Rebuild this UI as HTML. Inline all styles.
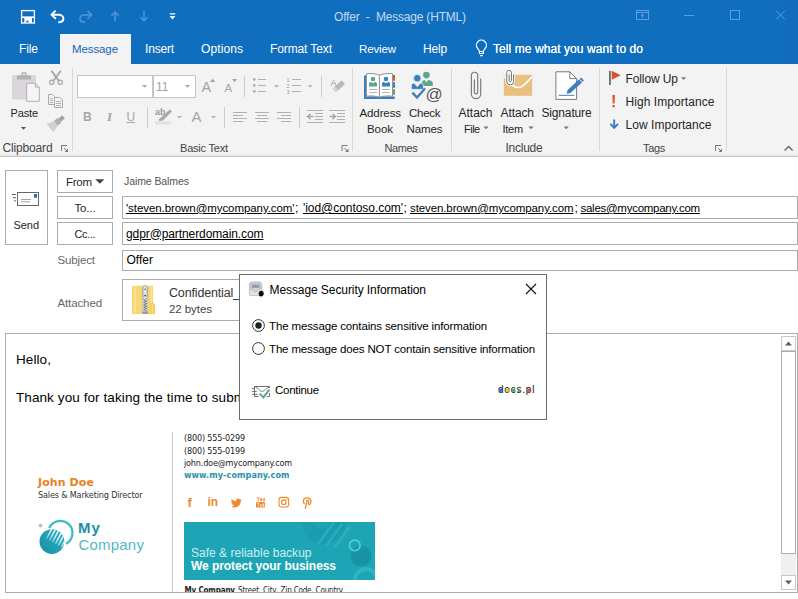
<!DOCTYPE html><html lang="en"><head><meta charset="utf-8"><title>Offer - Message (HTML)</title><style>
*{box-sizing:border-box;margin:0;padding:0}
html,body{width:798px;height:599px;overflow:hidden;background:#fff;font-family:"Liberation Sans",sans-serif}
.a,.t,svg{position:absolute}
.t{white-space:pre}
svg{overflow:visible}
#win{position:relative;width:798px;height:599px;overflow:hidden;background:#fff}
.sep{position:absolute;width:1px;background:#d8d8d8}
.btn{position:absolute;border:1px solid #ababab;background:#fff}
.fld{position:absolute;border:1px solid #ababab;background:#fff}
</style></head><body><div id="win"><header><div class="a" style="left:0px;top:0px;width:798px;height:64px;background:#106ebe"></div><div class="a" style="left:782px;top:0px;width:16px;height:64px;background:linear-gradient(90deg,#106ebe,#146abf 45%)"></div><span class="t" style="left:334px;top:11px;font-size:12px;line-height:12px;color:#c3daf0;letter-spacing:-0.191px;">Offer  -  Message (HTML)</span><div class="a" style="left:60px;top:34px;width:71px;height:30px;background:#f3f3f3"></div><nav><span class="t" style="left:19px;top:42.5px;font-size:12px;line-height:12px;color:#fff;letter-spacing:-0.098px;">File</span><span class="t" style="left:72px;top:43.5px;font-size:11.5px;line-height:11.5px;color:#1565b6;letter-spacing:-0.103px;">Message</span><span class="t" style="left:145px;top:42.5px;font-size:12px;line-height:12px;color:#fff;letter-spacing:-0.185px;">Insert</span><span class="t" style="left:201px;top:42.5px;font-size:12px;line-height:12px;color:#fff;letter-spacing:0.099px;">Options</span><span class="t" style="left:270px;top:42.5px;font-size:12px;line-height:12px;color:#fff;letter-spacing:-0.109px;">Format Text</span><span class="t" style="left:359px;top:43.5px;font-size:11.5px;line-height:11.5px;color:#fff;letter-spacing:-0.131px;">Review</span><span class="t" style="left:423px;top:42.5px;font-size:12px;line-height:12px;color:#fff;letter-spacing:-0.196px;">Help</span><span class="t" style="left:493px;top:42.5px;font-size:12px;line-height:12px;color:#fff;letter-spacing:0.073px;text-shadow:0 0 0.4px #fff;">Tell me what you want to do</span></nav></header><svg style="left:0;top:0" width="798" height="64" viewBox="0 0 798 64"><g fill="none" stroke="#fff" stroke-width="1.3"><rect x="21.6" y="10.6" width="12.8" height="12.4"/><path d="M21.6 17.2H34.4" stroke-width="1.6"/></g><path d="M24.3 18H32V23H28.6V20.8H26.2V23H24.3Z" fill="#fff"/><g fill="none" stroke="#fff" stroke-width="2" stroke-linejoin="miter"><path d="M55.6 10.6L51.6 14.8L55.9 18.9"/><path d="M52 14.8H58.5C61.6 14.8 63.4 16.6 63.4 18.6C63.4 20.8 61.6 22.3 58.3 22.3" stroke-linecap="butt"/></g><g fill="none" stroke="#4a93d6" stroke-width="1.8"><path d="M87.6 10.8L91.6 14.8L87.4 18.9"/><path d="M91.2 14.8H84.8C81.8 14.8 80 16.6 80 18.6C80 20.8 81.8 22.3 85 22.3"/></g><g fill="none" stroke="#4a93d6" stroke-width="1.7"><path d="M115 21.6V12M111.3 15.8L115 12L118.7 15.8"/><path d="M144 11V20.8M140.3 17L144 20.8L147.7 17"/></g><path d="M169.8 13.2H175.2V14.4H169.8Z M169.6 16H175.4L172.5 19.4Z" fill="#fff"/><g fill="none" stroke="#fff" stroke-width="1.2" stroke-linejoin="round"><path d="M479.4 53.5V51L477.4 48.2A5 5 0 1 1 485.4 48.2L483.4 51V53.5Z"/><path d="M479.4 51.5H483.4M480.2 55.7H482.8"/></g><g fill="none" stroke="#5d9fdc" stroke-width="1"><rect x="636.5" y="10.5" width="12" height="9"/><path d="M636.5 12.5H648.5M642.5 18V14.2M640.8 15.8L642.5 14.2L644.2 15.8"/><path d="M684 15.5H694"/><rect x="730.5" y="10.5" width="9" height="9"/><path d="M776 10.5L785 19.5M785 10.5L776 19.5"/></g></svg><section id="ribbon"><div class="a" style="left:0px;top:64px;width:798px;height:91px;background:#f3f3f3"></div><div class="a" style="left:0px;top:155px;width:798px;height:1px;background:#e4e4e4"></div><div class="a" style="left:0px;top:156px;width:798px;height:1px;background:#c8c8c8"></div><div class="sep" style="left:72px;top:68px;height:83px"></div><div class="sep" style="left:352px;top:68px;height:83px"></div><div class="sep" style="left:451px;top:68px;height:83px"></div><div class="sep" style="left:599px;top:68px;height:83px"></div><div class="sep" style="left:726px;top:68px;height:83px"></div><span class="t" style="left:10.5px;top:108px;font-size:11px;line-height:11px;color:#262626;letter-spacing:-0.142px;">Paste</span><span class="t" style="left:2.5px;top:142px;font-size:12px;line-height:12px;color:#444444;letter-spacing:-0.162px;">Clipboard</span><span class="t" style="left:180px;top:143px;font-size:11px;line-height:11px;color:#444444;letter-spacing:-0.204px;">Basic Text</span><span class="t" style="left:384.5px;top:143px;font-size:11px;line-height:11px;color:#444444;letter-spacing:-0.410px;">Names</span><span class="t" style="left:505.5px;top:142px;font-size:12px;line-height:12px;color:#444444;letter-spacing:-0.262px;">Include</span><span class="t" style="left:643px;top:143px;font-size:11px;line-height:11px;color:#444444;letter-spacing:-0.357px;">Tags</span><span class="t" style="left:359.5px;top:107.5px;font-size:11.5px;line-height:11.5px;color:#262626;letter-spacing:-0.106px;">Address</span><span class="t" style="left:367px;top:123.5px;font-size:11.5px;line-height:11.5px;color:#262626;letter-spacing:-0.062px;">Book</span><span class="t" style="left:409px;top:107.5px;font-size:11.5px;line-height:11.5px;color:#262626;letter-spacing:-0.247px;">Check</span><span class="t" style="left:406.5px;top:123.5px;font-size:11.5px;line-height:11.5px;color:#262626;letter-spacing:-0.097px;">Names</span><span class="t" style="left:458.5px;top:106.5px;font-size:12px;line-height:12px;color:#262626;letter-spacing:-0.006px;">Attach</span><span class="t" style="left:464px;top:123.5px;font-size:11px;line-height:11px;color:#262626;letter-spacing:-0.496px;">File</span><span class="t" style="left:500.5px;top:106.5px;font-size:12px;line-height:12px;color:#262626;letter-spacing:-0.097px;">Attach</span><span class="t" style="left:502.5px;top:123.5px;font-size:11px;line-height:11px;color:#262626;letter-spacing:-0.259px;">Item</span><span class="t" style="left:541.5px;top:106.5px;font-size:12px;line-height:12px;color:#262626;letter-spacing:-0.162px;">Signature</span><span class="t" style="left:625.5px;top:73px;font-size:12px;line-height:12px;color:#262626;letter-spacing:-0.101px;">Follow Up</span><span class="t" style="left:625.5px;top:96px;font-size:12px;line-height:12px;color:#262626;letter-spacing:0.066px;">High Importance</span><span class="t" style="left:625.5px;top:119px;font-size:12px;line-height:12px;color:#262626;letter-spacing:0.045px;">Low Importance</span><div class="a" style="left:77px;top:75px;width:76px;height:23px;border:1px solid #c6c6c6;background:#fff"></div><div class="a" style="left:153px;top:75px;width:43px;height:23px;border:1px solid #c6c6c6;background:#fff"></div><span class="t" style="left:156px;top:80.5px;font-size:12px;line-height:12px;color:#a0a0a0;">11</span><span class="t" style="left:83px;top:110.5px;font-size:12px;line-height:12px;color:#a6a6a6;font-weight:700;">B</span><span class="t" style="left:107px;top:109.5px;font-size:13px;line-height:13px;color:#a6a6a6;font-style:italic;font-family:'Liberation Serif',serif;font-weight:700;">I</span><span class="t" style="left:126.5px;top:110.5px;font-size:12px;line-height:12px;color:#a6a6a6;text-decoration:underline;">U</span><svg style="left:0;top:64px" width="798" height="92" viewBox="0 64 798 92"><rect x="12" y="75" width="24" height="24.5" rx="1.2" fill="#d9d5db"/><path d="M17 79.6V75.6H21.2V74.4C21.2 72.8 22.4 71.8 24 71.8C25.6 71.8 26.8 72.8 26.8 74.4V75.6H31V79.6Z" fill="#b4b1b7"/><circle cx="24" cy="74.4" r="1.1" fill="#f3f3f3"/><path d="M26.7 83.3H35.4L39.3 87.2V101.3H26.7Z" fill="#f7f4f8" stroke="#b2b0b4" stroke-width="1"/><path d="M35.4 83.3V87.2H39.3" fill="none" stroke="#b2b0b4" stroke-width="1"/><path d="M20.9 127H26.1L23.5 129.8Z" fill="#555"/><g fill="none" stroke="#a3a3a3" stroke-width="1.8"><path d="M51.4 70.8L58.4 80.2M60.8 70.8L53.8 80.2"/><circle cx="51.8" cy="82.3" r="2.1" stroke-width="1.2"/><circle cx="60.2" cy="82.3" r="2.1" stroke-width="1.2"/></g><g fill="#f6f4f7" stroke="#aaa8ac" stroke-width="1"><path d="M48.5 94.5H52.5L54.5 96.5V104.5H48.5Z"/><path d="M54.5 97.5H60L62.5 100V107.5H54.5Z"/></g><g stroke="#aaa8ac" stroke-width="0.9"><path d="M50 98.5H53M50 100.5H53M50 102.5H53M56 101.5H61M56 103.5H61M56 105.5H61"/></g><g transform="translate(56.2 123) rotate(-40)"><rect x="4.4" y="-2" width="5.2" height="4" fill="#a2a0a4"/><rect x="-0.6" y="-3" width="5" height="6" fill="#b3b0b5"/><path d="M-0.6 -3.2L-8 -5.4V5.4L-0.6 3.2Z" fill="#d2ced4"/></g><g transform="translate(61 145)" fill="none" stroke="#7a7a7a" stroke-width="1"><path d="M0.5 6V0.5H6"/><path d="M3 3L6.5 6.5" /><path d="M7 3.6V7H3.6Z" fill="#7a7a7a" stroke="none"/></g></svg><span class="t" style="left:201.5px;top:80px;font-size:14.5px;line-height:14.5px;color:#a6a6a6;">A</span><span class="t" style="left:224.5px;top:83px;font-size:11.5px;line-height:11.5px;color:#a6a6a6;">A</span><span class="t" style="left:191.5px;top:109px;font-size:15px;line-height:15px;color:#a6a6a6;">A</span><span class="t" style="left:155px;top:108px;font-size:9px;line-height:9px;color:#9a9a9a;font-weight:700;">ab</span><span class="t" style="left:330.5px;top:78.5px;font-size:9px;line-height:9px;color:#9a9a9a;">A</span><span class="t" style="left:286.5px;top:77.5px;font-size:5.5px;line-height:5.5px;color:#9a9a9a;">1</span><span class="t" style="left:286.5px;top:83.5px;font-size:5.5px;line-height:5.5px;color:#9a9a9a;">2</span><span class="t" style="left:286.5px;top:89.5px;font-size:5.5px;line-height:5.5px;color:#9a9a9a;">3</span><svg style="left:0;top:64px" width="798" height="92" viewBox="0 64 798 92"><path d="M141.9 85H147.1L144.5 87.8Z" fill="#a8a8a8"/><path d="M184.9 85H190.1L187.5 87.8Z" fill="#a8a8a8"/><path d="M210 82L212.6 78.8L215.2 82Z M232 79L237.2 79L234.6 82.2Z" fill="#a6a6a6"/><path d="M244.5 76V97" stroke="#cdcdcd" stroke-width="1"/><path d="M321.5 76V97" stroke="#cdcdcd" stroke-width="1"/><path d="M147.5 107V128" stroke="#cdcdcd" stroke-width="1"/><path d="M224.5 107V128" stroke="#cdcdcd" stroke-width="1"/><path d="M299.5 107V128" stroke="#cdcdcd" stroke-width="1"/><g fill="#b0b0b0"><circle cx="254.3" cy="79.4" r="1.4"/><circle cx="254.3" cy="85.4" r="1.4"/><circle cx="254.3" cy="91.4" r="1.4"/></g><path d="M258 79.5H266M258 85.5H266M258 91.5H266 M292 79.5H301M292 85.5H301M292 91.5H301" stroke="#b0b0b0" stroke-width="1"/><path d="M273.9 85H279.1L276.5 87.8Z" fill="#b8b8b8"/><path d="M307.59999999999997 85H312.8L310.2 87.8Z" fill="#b8b8b8"/><path d="M176.9 116H182.1L179.5 118.8Z" fill="#b8b8b8"/><path d="M210.9 116H216.1L213.5 118.8Z" fill="#b8b8b8"/><g transform="translate(338.5 86.5) rotate(-42)"><rect x="-6" y="-2.6" width="12.5" height="5.2" rx="1" fill="#b9b9b9"/><rect x="-6" y="-2.6" width="3.2" height="5.2" rx="1" fill="#d8d8d8"/></g><rect x="155" y="121.2" width="16" height="3.4" fill="#e6dfe8"/><path d="M169.8 109.4L172 111.6L162.6 120.8H158.6V119.6Z" fill="#a9a9a9"/><path d="M233 112.5H247M233 115.5H243M233 118.5H247M233 121.5H243 M255 112.5H269M257 115.5H267M255 118.5H269M257 121.5H267 M277 112.5H291M281 115.5H291M277 118.5H291M281 121.5H291" stroke="#b0b0b0" stroke-width="1"/><path d="M307 110.5H323M315 113.5H323M315 116.5H323M315 119.5H323M307 122.5H323 M329 110.5H345M337 113.5H345M337 116.5H345M337 119.5H345M329 122.5H345" stroke="#b0b0b0" stroke-width="1"/><path d="M313.5 116.5H308M310.6 113.8L307.6 116.5L310.6 119.2 M329.5 116.5H335M332.4 113.8L335.4 116.5L332.4 119.2" stroke="#a6a6a6" stroke-width="1.4" fill="none"/><g transform="translate(341.5 145)" fill="none" stroke="#7a7a7a" stroke-width="1"><path d="M0.5 6V0.5H6"/><path d="M3 3L6.5 6.5" /><path d="M7 3.6V7H3.6Z" fill="#7a7a7a" stroke="none"/></g></svg><span class="t" style="left:425.5px;top:85.5px;font-size:17px;line-height:17px;color:#555;">@</span><svg style="left:0;top:64px" width="798" height="92" viewBox="0 64 798 92"><path d="M364 75.4H366.2V96.5H394.8V98.9H364Z" fill="#3d7ebf"/><rect x="392.6" y="75" width="2.4" height="5.8" fill="#d65532"/><rect x="392.6" y="82.2" width="2.4" height="5.6" fill="#3d7ebf"/><rect x="392.6" y="89.2" width="2.4" height="5.6" fill="#5ea58a"/><path d="M366.4 73.8C371 73.2 376 73.6 379.4 75.2C382.8 73.6 388 73.2 392.6 73.8V96.2C388 95.7 383 95.9 379.4 97.2C376 95.9 371 95.7 366.4 96.2Z" fill="#fff" stroke="#8c8c8c" stroke-width="1"/><path d="M379.4 75.2V97" stroke="#8c8c8c" stroke-width="1"/><circle cx="373" cy="79" r="2.3" fill="#5ea58a"/><path d="M369 86.6V84C369 82.6 370 82 371 82L373 83.2L375 82C376 82 377 82.6 377 84V86.6Z" fill="#5ea58a"/><circle cx="386" cy="79" r="2.3" fill="#3d7ebf"/><path d="M382 86.6V84C382 82.6 383 82 384 82L386 83.2L388 82C389 82 390 82.6 390 84V86.6Z" fill="#3d7ebf"/><path d="M369 89.5H377M369 92.5H377M382 89.5H390M382 92.5H390" stroke="#b4b4b4" stroke-width="1"/><circle cx="426.4" cy="75.1" r="3.3" fill="#5ea58a"/><path d="M422 86V83C422 81 423.2 80 424.6 80L426.4 82.4L428.2 80C429.6 80 432.8 81 432.8 83V86Z" fill="#5ea58a"/><circle cx="417.3" cy="78.2" r="3.8" fill="#3d7ebf" stroke="#f3f3f3" stroke-width="0.8"/><path d="M411.3 89.4V86C411.3 84 412.6 83 414 83L417.3 86.6L420.6 83C422 83 423.4 84 423.4 86V89.4Z" fill="#3d7ebf" stroke="#f3f3f3" stroke-width="0.8"/><path d="M412.4 92.6L417 97.6L425 88.4" fill="none" stroke="#3d7ebf" stroke-width="2.3"/><path d="M480.7 78.6V94A4.65 4.65 0 0 1 471.4 94V75.4A3.15 3.15 0 0 1 477.7 75.4V92.2A1.65 1.65 0 0 1 474.4 92.2V79.6" fill="none" stroke="#7d7d7d" stroke-width="1.2"/><rect x="503.8" y="74.8" width="28.4" height="21" fill="#e9c080"/><path d="M503.8 75.6C509 82 513 87.6 518 87.6C523 87.6 527 82 532.2 76.4" fill="none" stroke="#fff" stroke-width="1.5"/><path d="M513.6 74.4V81.6A3.4 3.4 0 0 1 506.8 81.6V72.6A2.3 2.3 0 0 1 511.4 72.6V80.6A1.1 1.1 0 0 1 509.2 80.6V74.8" fill="none" stroke="#fff" stroke-width="2.6"/><path d="M513.6 74.4V81.6A3.4 3.4 0 0 1 506.8 81.6V72.6A2.3 2.3 0 0 1 511.4 72.6V80.6A1.1 1.1 0 0 1 509.2 80.6V74.8" fill="none" stroke="#6e6e6e" stroke-width="1"/><path d="M483.4 126.5H488.6L486 129.3Z" fill="#777"/><path d="M528.4 126.5H533.6L531 129.3Z" fill="#777"/><path d="M563.6 126.5H568.8000000000001L566.2 129.3Z" fill="#777"/><path d="M681.0 77.2H686.2L683.6 80.0Z" fill="#777"/><path d="M555.9 71.8H569.8L576.6 78.6V99.4H555.9Z" fill="#fff" stroke="#7a7a7a" stroke-width="1"/><path d="M569.8 71.8V78.6H576.6" fill="none" stroke="#7a7a7a" stroke-width="1"/><path d="M558.6 95.3H574.3" stroke="#3d7ebf" stroke-width="1"/><g transform="translate(566.6 93.8) rotate(-43)"><path d="M0 0L3.4 -2.1H19V2.1H3.4Z" fill="#3d7ebf"/><path d="M19.8 -2.1H21.8V2.1H19.8Z" fill="#3d7ebf"/></g><rect x="609" y="71" width="1.8" height="14" fill="#6a6a6a"/><path d="M611.7 70.8L620.8 75.3L611.7 79.8Z" fill="#d9502f"/><path d="M612.3 95H615L614.6 103.4H612.7Z M612.5 105H614.8V107.2H612.5Z" fill="#e05a33"/><path d="M614.2 119.4V127.6M610.4 123.8L614.2 127.8L618 123.8" fill="none" stroke="#3a7bc0" stroke-width="1.9"/><g transform="translate(715 145)" fill="none" stroke="#7a7a7a" stroke-width="1"><path d="M0.5 6V0.5H6"/><path d="M3 3L6.5 6.5" /><path d="M7 3.6V7H3.6Z" fill="#7a7a7a" stroke="none"/></g><path d="M784.6 150.6L788.6 146.6L792.6 150.6" fill="none" stroke="#666" stroke-width="1.4"/></svg></section><section id="compose"><div class="btn" style="left:5px;top:170px;width:43px;height:75px"></div><div class="btn" style="left:57px;top:170px;width:56px;height:23px"></div><div class="btn" style="left:57px;top:196px;width:56px;height:23px"></div><div class="btn" style="left:57px;top:222px;width:56px;height:23px"></div><div class="fld" style="left:122px;top:196px;width:676px;height:23px"></div><div class="fld" style="left:122px;top:222px;width:676px;height:23px"></div><div class="fld" style="left:122px;top:250px;width:676px;height:21px"></div><div class="fld" style="left:122px;top:279px;width:300px;height:42px"></div><span class="t" style="left:13.5px;top:220px;font-size:11px;line-height:11px;color:#262626;letter-spacing:-0.058px;">Send</span><span class="t" style="left:66px;top:176.5px;font-size:11.5px;line-height:11.5px;color:#262626;letter-spacing:-0.241px;">From</span><span class="t" style="left:74.5px;top:203px;font-size:11.5px;line-height:11.5px;color:#262626;letter-spacing:-0.163px;">To...</span><span class="t" style="left:74.5px;top:228.5px;font-size:11px;line-height:11px;color:#262626;letter-spacing:-0.361px;">Cc...</span><span class="t" style="left:57.5px;top:254.5px;font-size:11.5px;line-height:11.5px;color:#666;letter-spacing:-0.132px;">Subject</span><span class="t" style="left:57.5px;top:298px;font-size:11.5px;line-height:11.5px;color:#666;letter-spacing:-0.121px;">Attached</span><span class="t" style="left:124px;top:176px;font-size:10.5px;line-height:10.5px;color:#555;letter-spacing:-0.083px;">Jaime Balmes</span><span class="t" style="left:126px;top:203px;font-size:11.5px;line-height:11.5px;color:#000;letter-spacing:-0.074px;text-decoration:underline;">&#x27;steven.brown@mycompany.com&#x27;</span><span class="t" style="left:295px;top:202px;font-size:12px;line-height:12px;color:#000;">;</span><span class="t" style="left:303px;top:202px;font-size:12px;line-height:12px;color:#000;letter-spacing:-0.049px;text-decoration:underline;">&#x27;iod@contoso.com&#x27;</span><span class="t" style="left:403.5px;top:202px;font-size:12px;line-height:12px;color:#000;">;</span><span class="t" style="left:410px;top:203px;font-size:11.5px;line-height:11.5px;color:#000;letter-spacing:-0.104px;text-decoration:underline;">steven.brown@mycompany.com</span><span class="t" style="left:574.5px;top:202px;font-size:12px;line-height:12px;color:#000;">;</span><span class="t" style="left:580.5px;top:203px;font-size:11.5px;line-height:11.5px;color:#000;letter-spacing:-0.275px;text-decoration:underline;">sales@mycompany.com</span><span class="t" style="left:126px;top:227.5px;font-size:12px;line-height:12px;color:#000;letter-spacing:-0.097px;text-decoration:underline;">gdpr@partnerdomain.com</span><span class="t" style="left:126.5px;top:253.5px;font-size:12px;line-height:12px;color:#000;letter-spacing:0.007px;">Offer</span><span class="t" style="left:169px;top:287px;font-size:12.5px;line-height:12.5px;color:#333;letter-spacing:-0.158px;">Confidential_</span><span class="t" style="left:169px;top:303.5px;font-size:11.5px;line-height:11.5px;color:#444;letter-spacing:-0.065px;">22 bytes</span><svg style="left:0;top:160px" width="798" height="170" viewBox="0 160 798 170"><rect x="17.5" y="192.5" width="21" height="13" fill="#fff" stroke="#666" stroke-width="1"/><rect x="34" y="194" width="3" height="3.8" fill="#2e6db4"/><path d="M21 199.5H31M21 201.8H30" stroke="#9a9a9a" stroke-width="0.9"/><path d="M12 194.5H15.8M13 197.7H15.8M14 200.8H15.8" stroke="#555" stroke-width="1"/><path d="M95.2 179.2H104.4L99.8 183.8Z" fill="#444"/><rect x="132" y="285.8" width="21" height="28.2" fill="#f7d774"/><rect x="134.6" y="287" width="1.2" height="26" fill="#fbe9ab"/><rect x="150.8" y="287" width="1" height="16" fill="#fbe9ab"/><path d="M150.2 314V304.6L152.6 301.4L155 304.6V314Z" fill="#f5cf5c"/><path d="M152.4 304V313" stroke="#f9df8c" stroke-width="1"/><rect x="142.6" y="285.4" width="5" height="28.6" fill="#e4e4e4"/><path d="M142.6 299V314M147.6 299V314" stroke="#b5b5b5" stroke-width="0.7"/><rect x="142.9" y="285.8" width="4.4" height="13.4" rx="1.6" fill="#e3e3e3" stroke="#8e8e8e" stroke-width="0.8"/><path d="M144.2 289.3H146.2" stroke="#777" stroke-width="1"/><circle cx="145.2" cy="295.6" r="0.9" fill="#444"/><path d="M143.6 300L146.8 301.2L143.6 302.4L146.8 303.6L143.6 304.8L146.8 306L143.6 307.2L146.8 308.4L143.6 309.6L146.8 310.8" fill="none" stroke="#5a5a5a" stroke-width="0.7"/><rect x="142.4" y="311.4" width="5.4" height="2.6" fill="#9c9c9c"/></svg></section><main><div class="a" style="left:5px;top:333px;width:793px;height:260px;border:1px solid #ababab;background:#fff"></div><span class="t" style="left:16px;top:353px;font-size:13.5px;line-height:13.5px;color:#000;letter-spacing:0.088px;">Hello,</span><span class="t" style="left:16px;top:391px;font-size:13.5px;line-height:13.5px;color:#000;letter-spacing:0.088px;">Thank you for taking the time to submit</span><div class="a" style="left:780px;top:334px;width:17px;height:258px;background:#fff"></div><div class="a" style="left:781px;top:351px;width:15px;height:203px;border:1px solid #ababab;background:#fff"></div><div class="a" style="left:781px;top:554px;width:15px;height:21px;background:#f0f0f0"></div><div class="a" style="left:781px;top:336px;width:15px;height:15px;border:1px solid #c8c8c8;background:#fff"></div><div class="a" style="left:781px;top:575px;width:15px;height:15px;border:1px solid #c8c8c8;background:#fff"></div><svg style="left:781px;top:336px" width="15" height="15"><path d="M4 9.5L7.5 5.5L11 9.5Z" fill="#606060"/></svg><svg style="left:781px;top:575px" width="15" height="15"><path d="M4 5.5L7.5 9.5L11 5.5Z" fill="#606060"/></svg><div id="sig"><div class="a" style="left:172px;top:432px;width:1px;height:160px;background:#c8c8c8"></div><span class="t" style="left:38px;top:477px;font-size:11px;line-height:11px;color:#e8801e;font-family:'DejaVu Sans',sans-serif;font-weight:700;letter-spacing:0.094px;">John Doe</span><span class="t" style="left:38px;top:490.5px;font-size:9px;line-height:9px;color:#333;font-family:'DejaVu Sans Condensed','DejaVu Sans',sans-serif;letter-spacing:-0.154px;">Sales &amp; Marketing Director</span><span class="t" style="left:184px;top:434px;font-size:9px;line-height:9px;color:#222;font-family:'DejaVu Sans Condensed','DejaVu Sans',sans-serif;letter-spacing:-0.172px;">(800) 555-0299</span><span class="t" style="left:184px;top:446.5px;font-size:9px;line-height:9px;color:#222;font-family:'DejaVu Sans Condensed','DejaVu Sans',sans-serif;letter-spacing:-0.172px;">(800) 555-0199</span><span class="t" style="left:184px;top:459px;font-size:9px;line-height:9px;color:#222;font-family:'DejaVu Sans Condensed','DejaVu Sans',sans-serif;letter-spacing:-0.177px;">john.doe@mycompany.com</span><span class="t" style="left:184px;top:471px;font-size:9px;line-height:9px;color:#2a93a6;font-family:'DejaVu Sans Condensed','DejaVu Sans',sans-serif;font-weight:700;letter-spacing:0.076px;">www.my-company.com</span><span class="t" style="left:78px;top:520px;font-size:15px;line-height:15px;color:#1a8fa3;font-weight:700;letter-spacing:1.104px;">My</span><span class="t" style="left:78.5px;top:536.5px;font-size:15px;line-height:15px;color:#56b7c3;letter-spacing:0.200px;">Company</span><div class="a" style="left:184px;top:522px;width:191px;height:58px;background:#1ea5b5"></div><span class="t" style="left:191px;top:547px;font-size:12px;line-height:12px;color:#c9eff3;letter-spacing:0.020px;">Safe &amp; reliable backup</span><span class="t" style="left:191px;top:560px;font-size:12px;line-height:12px;color:#fff;font-weight:700;letter-spacing:-0.063px;">We protect your business</span><div class="a" style="left:184px;top:585px;width:200px;height:7px;overflow:hidden"><span class="t" style="left:0.5px;top:2px;font-size:8px;line-height:8px;color:#222;font-family:'DejaVu Sans Condensed','DejaVu Sans',sans-serif;font-weight:700;letter-spacing:-0.150px;">My Company</span><span class="t" style="left:54px;top:2px;font-size:8px;line-height:8px;color:#222;font-family:'DejaVu Sans Condensed','DejaVu Sans',sans-serif;letter-spacing:-0.180px;">Street, City, Zip Code, Country</span></div><span class="t" style="left:187.5px;top:496px;font-size:13px;line-height:13px;color:#ee8a2c;font-weight:700;">f</span><span class="t" style="left:207.6px;top:496.4px;font-size:12px;line-height:12px;color:#ee8a2c;font-weight:700;letter-spacing:-0.2px;">in</span><svg style="left:0;top:420px" width="400" height="179" viewBox="0 420 400 179"><defs><linearGradient id="lg" x1="0" y1="1" x2="1" y2="0"><stop offset="0" stop-color="#148fa5"/><stop offset="1" stop-color="#2fb2c4"/></linearGradient><clipPath id="cc"><circle cx="51.9" cy="541.6" r="12.4"/></clipPath><linearGradient id="st" gradientUnits="userSpaceOnUse" x1="62" y1="530" x2="50" y2="545"><stop offset="0" stop-color="#fff" stop-opacity="1"/><stop offset="0.55" stop-color="#fff" stop-opacity="0.75"/><stop offset="1" stop-color="#fff" stop-opacity="0"/></linearGradient><clipPath id="bn"><rect x="184" y="522" width="191" height="58"/></clipPath></defs><circle cx="40.5" cy="525.5" r="1.9" fill="#c4bfc2"/><path d="M49.2 527.9A12.2 12.2 0 1 1 66 543.8" fill="none" stroke="#3fbac8" stroke-width="2.3"/><circle cx="51.9" cy="541.6" r="12.4" fill="url(#lg)"/><g clip-path="url(#cc)" stroke="url(#st)" stroke-width="1.5"><path d="M46.4 539L52.6 527.5M49.4 540.6L55.8 528.6M52.4 542.2L58.8 530.2M55.4 543.8L61.8 531.8M58.4 545.4L64.8 533.4M61.4 547L67.8 535"/></g><path d="M241.8 499.6C241.4 499.9 240.9 500 240.5 500.1C241 499.8 241.3 499.3 241.5 498.8C241.1 499.1 240.5 499.3 240 499.4C239.6 498.9 238.9 498.6 238.3 498.6C236.8 498.6 235.8 500 236.1 501.3C234.3 501.2 232.7 500.3 231.6 499C231 500 231.3 501.4 232.3 502C231.9 502 231.6 501.9 231.3 501.7C231.3 502.8 232 503.7 233.1 503.9C232.8 504 232.4 504 232.1 504C232.4 504.8 233.2 505.5 234.2 505.5C233.3 506.2 232.1 506.6 231 506.4C232 507 233.2 507.4 234.4 507.4C238.6 507.4 241 503.8 240.8 500.7C241.2 500.4 241.6 500 241.8 499.6Z" fill="#ee8a2c"/><g fill="#ee8a2c"><rect x="256" y="502" width="9" height="5.6" rx="1.2"/><path d="M256.4 496.8L257.8 499.4V501.2H258.6V499.4L260 496.8H259.2L258.2 498.8L257.2 496.8Z"/><rect x="260.2" y="498" width="1.8" height="3.2" rx="0.8"/><path d="M262.8 498V500.6Q262.8 501.2 263.6 501.2H264.8V498H264V500.4H263.6V498Z"/></g><path d="M257.2 503.2H259.4M258.3 503.2V506.6M260.6 504.2V506.4H261.8V504.2M263 503V506.4H264V504.6H263" stroke="#fff" stroke-width="0.6" fill="none"/><g fill="none" stroke="#ee8a2c" stroke-width="1.1"><rect x="279" y="497.4" width="9.6" height="9.6" rx="2.4"/><circle cx="283.8" cy="502.2" r="2.3"/></g><circle cx="286.5" cy="499.5" r="0.6" fill="#ee8a2c"/><path d="M305.4 508.4C305.6 506.6 306.4 504.4 306.7 502.6C306.2 501 307.4 499.8 308.4 500.4C309.4 501 308.2 503 308.4 503.8C308.8 505.2 311 504.4 311 501.6C311 499.2 309.2 497.9 307.2 497.9C304.8 497.9 303.4 499.6 303.4 501.6C303.4 502.6 303.8 503.4 304.4 503.8" fill="none" stroke="#ee8a2c" stroke-width="1.3" stroke-linecap="round"/><g clip-path="url(#bn)"><circle cx="324" cy="522" r="22" fill="#1797aa" opacity="0.55"/><circle cx="322" cy="520" r="9" fill="#1ea5b5" opacity="0.8"/><g stroke="#2fb6c5" stroke-width="2.4" opacity="0.7"><path d="M318 544L334 522M326 546L342 524M334 548L350 526"/></g><circle cx="361" cy="556" r="10.5" fill="#178da1" opacity="0.75"/><circle cx="366" cy="580" r="11" fill="none" stroke="#2dbccb" stroke-width="4" opacity="0.7"/><circle cx="354.8" cy="545.4" r="5.3" fill="none" stroke="#4fd0da" stroke-width="1.6"/></g></svg></div></main><div id="dlg" role="dialog"><div class="a" style="left:239px;top:274px;width:308px;height:146px;border:1px solid #6b6b6b;background:#fff"></div><span class="t" style="left:269.5px;top:284px;font-size:12px;line-height:12px;color:#000;letter-spacing:-0.082px;">Message Security Information</span><span class="t" style="left:269px;top:320.5px;font-size:11.5px;line-height:11.5px;color:#000;letter-spacing:-0.138px;">The message contains sensitive information</span><span class="t" style="left:269px;top:343.5px;font-size:11.5px;line-height:11.5px;color:#000;letter-spacing:-0.149px;">The message does NOT contain sensitive information</span><span class="t" style="left:275px;top:384.5px;font-size:11.5px;line-height:11.5px;color:#000;letter-spacing:-0.273px;">Continue</span><svg style="left:252px;top:319px" width="13" height="13"><circle cx="6.5" cy="6.5" r="5.9" fill="#fff" stroke="#333" stroke-width="1"/><circle cx="6.5" cy="6.5" r="3.2" fill="#222"/></svg><svg style="left:252px;top:342px" width="13" height="13"><circle cx="6.5" cy="6.5" r="5.9" fill="#fff" stroke="#333" stroke-width="1"/></svg><svg style="left:526px;top:284px" width="10" height="10"><path d="M0 0L10 10M10 0L0 10" stroke="#111" stroke-width="1.1" fill="none"/></svg><span class="t" style="left:498px;top:384.8px;font-size:10px;line-height:10px;color:#111;letter-spacing:0.787px;">docs.pl</span><svg style="left:239px;top:274px" width="308" height="146" viewBox="239 274 308 146"><defs><linearGradient id="sv" x1="0" y1="0" x2="0" y2="1"><stop offset="0" stop-color="#c4c8d0"/><stop offset="1" stop-color="#e6e8ec"/></linearGradient></defs><path d="M249.4 283.4L251 282H260L261.8 283.4V294.6Q261.8 295.6 260.8 295.6H250.4Q249.4 295.6 249.4 294.6Z" fill="url(#sv)" stroke="#b3b7c0" stroke-width="0.8"/><path d="M251.6 284.4H259.6V287.4Q255.6 288.8 251.6 287.4Z" fill="#979ca8"/><path d="M249.6 287L255.6 291.8L261.6 287" fill="none" stroke="#aeb2bc" stroke-width="1"/><path d="M258.7 293.8C258.7 292 259.8 290.8 261.3 290.8C262.9 290.8 263.7 292 263.7 293.6C263.7 295.4 262.6 296.5 260.9 296.5C259.5 296.5 258.7 295.4 258.7 293.8Z" fill="#0a0a0a"/><g fill="none" stroke="#707070" stroke-width="1"><path d="M258.6 396.5H254.5V386.5H269.5V388M269.5 393V396.5H267"/><path d="M255.4 387.2C258.6 388 259.6 391.4 262 391.4C264.4 391.4 266.4 388 269 387.2" stroke-width="0.9"/><path d="M252 388.4H254.4M252 391.4H256.8M252 394.4H257.8"/></g><path d="M259.6 393.6L263.4 397.4L269.3 389.6" fill="none" stroke="#5ea58a" stroke-width="2"/><circle cx="500.9" cy="390.2" r="1.7" fill="#1477d4"/><circle cx="507.4" cy="390.2" r="1.7" fill="#f2c500"/><circle cx="513.8" cy="390.2" r="1.5" fill="#2fa84f"/><circle cx="519" cy="391" r="1.1" fill="#2fa84f"/><circle cx="529" cy="390.2" r="1.7" fill="#ef4b2f"/></svg></div></div></body></html>
